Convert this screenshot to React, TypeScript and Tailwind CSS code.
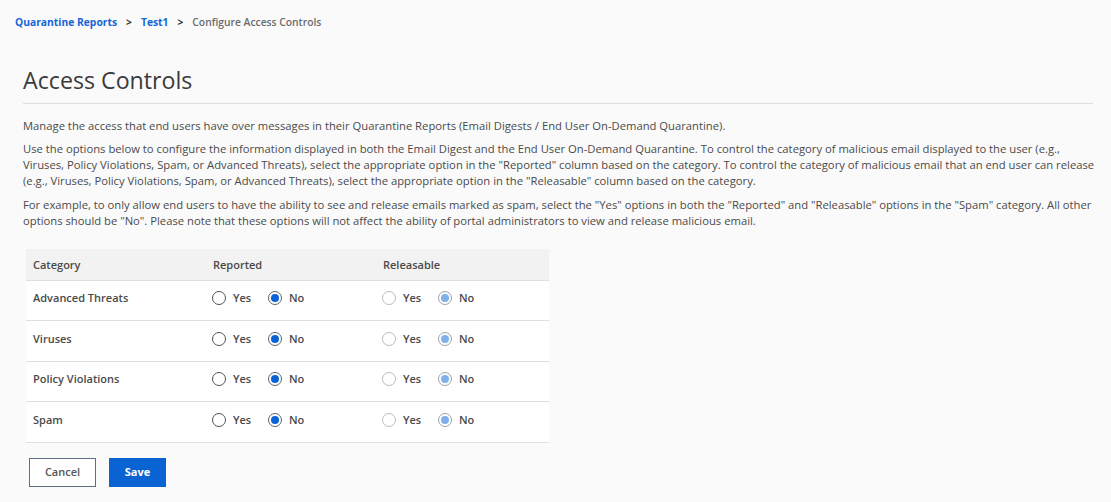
import { useState } from "react"

type Choice = "yes" | "no"

type Row = {
  name: string
  reported: Choice
  releasable: Choice
}

const INITIAL_ROWS: Row[] = [
  { name: "Advanced Threats", reported: "no", releasable: "no" },
  { name: "Viruses", reported: "no", releasable: "no" },
  { name: "Policy Violations", reported: "no", releasable: "no" },
  { name: "Spam", reported: "no", releasable: "no" },
]

function Radio({
  checked,
  disabled,
  label,
  onSelect,
}: {
  checked: boolean
  disabled?: boolean
  label: string
  onSelect: () => void
}) {
  const ring = disabled
    ? checked
      ? "border-[#9aa3ad]"
      : "border-[#b8bec5]"
    : checked
      ? "border-[#5b6470]"
      : "border-[#4a525c]"
  const dot = disabled ? "bg-[#7fb0ea]" : "bg-[#0a63d6]"

  return (
    <label
      className={`flex items-center gap-[7px] ${disabled ? "cursor-default" : "cursor-pointer"}`}
      onClick={() => !disabled && onSelect()}
    >
      <span
        className={`flex h-[14px] w-[14px] items-center justify-center rounded-full border bg-white ${ring}`}
      >
        {checked ? <span className={`h-[8px] w-[8px] rounded-full ${dot}`} /> : null}
      </span>
      <span className="text-[11px] font-semibold text-[#4a4a4a]">{label}</span>
    </label>
  )
}

function ChoiceGroup({
  value,
  disabled,
  onChange,
}: {
  value: Choice
  disabled?: boolean
  onChange: (value: Choice) => void
}) {
  return (
    <div className="flex items-center">
      <div className="w-[56px]">
        <Radio checked={value === "yes"} disabled={disabled} label="Yes" onSelect={() => onChange("yes")} />
      </div>
      <Radio checked={value === "no"} disabled={disabled} label="No" onSelect={() => onChange("no")} />
    </div>
  )
}

export default function App() {
  const [rows, setRows] = useState<Row[]>(INITIAL_ROWS)

  const update = (index: number, key: "reported" | "releasable", value: Choice) => {
    setRows((previous) =>
      previous.map((row, i) => (i === index ? { ...row, [key]: value } : row))
    )
  }

  return (
    <div
      className="min-h-[502px] bg-[#fafafa] text-[#444]"
      style={{ fontFamily: '"Open Sans", "Noto Sans", sans-serif' }}
    >
      <nav className="flex items-center px-[15px] pt-[15px] text-[10.3px] font-bold leading-[14px]">
        <a className="text-[#1565d8]" href="#">
          Quarantine Reports
        </a>
        <span className="mx-[9px] text-[#333]">&gt;</span>
        <a className="text-[#1565d8]" href="#">
          Test1
        </a>
        <span className="mx-[9px] text-[#333]">&gt;</span>
        <span className="font-semibold text-[#6b6b6b]">Configure Access Controls</span>
      </nav>

      <div className="px-[23px] pr-[15px]">
        <h1 className="mt-[35px] text-[23.2px] leading-[32px] text-[#3a3a3a]">Access Controls</h1>
        <div className="mr-[3px] mt-[7px] h-px bg-[#dedede]" />

        <div className="mt-[14px] text-[11.25px] leading-[16px] text-[#4a4a4a]">
          <p className="mb-[7px]">
            Manage the access that end users have over messages in their Quarantine Reports (Email Digests / End
            User On-Demand Quarantine).
          </p>
          <p className="mb-[8px]">
            Use the options below to configure the information displayed in both the Email Digest and the End User
            On-Demand Quarantine. To control the category of malicious email displayed to the user (e.g.,
            <br />
            Viruses, Policy Violations, Spam, or Advanced Threats), select the appropriate option in the "Reported"
            column based on the category. To control the category of malicious email that an end user can release
            <br />
            (e.g., Viruses, Policy Violations, Spam, or Advanced Threats), select the appropriate option in the
            "Releasable" column based on the category.
          </p>
          <p>
            For example, to only allow end users to have the ability to see and release emails marked as spam,
            select the "Yes" options in both the "Reported" and "Releasable" options in the "Spam" category. All
            other
            <br />
            options should be "No". Please note that these options will not affect the ability of portal
            administrators to view and release malicious email.
          </p>
        </div>

        <table className="ml-[3px] mt-[20px] w-[523px] border-collapse text-[11px] text-[#444]">
          <thead>
            <tr className="h-[31px] bg-[#f2f2f2] text-left">
              <th className="w-[180px] pl-[7px] pt-[2px] font-semibold text-[#4a4a4a]">Category</th>
              <th className="w-[170px] pl-[7px] pt-[2px] font-semibold text-[#4a4a4a]">Reported</th>
              <th className="pl-[7px] pt-[2px] font-semibold text-[#4a4a4a]">Releasable</th>
            </tr>
          </thead>
          <tbody>
            {rows.map((row, index) => (
              <tr key={row.name} className="h-[40.5px] border-t border-b border-[#e0e0e0] bg-white">
                <td className="pb-[4px] pl-[7px] font-semibold text-[#4a4a4a]">{row.name}</td>
                <td className="pb-[4px] pl-[6px]">
                  <ChoiceGroup value={row.reported} onChange={(value) => update(index, "reported", value)} />
                </td>
                <td className="pb-[4px] pl-[6px]">
                  <ChoiceGroup
                    value={row.releasable}
                    disabled
                    onChange={(value) => update(index, "releasable", value)}
                  />
                </td>
              </tr>
            ))}
          </tbody>
        </table>

        <div className="ml-[6px] mt-[15px] flex gap-[13px]">
          <button
            type="button"
            className="h-[29px] w-[67px] border border-[#5c6f86] bg-white text-[11px] font-semibold text-[#555]"
          >
            Cancel
          </button>
          <button
            type="button"
            className="h-[29px] w-[57px] bg-[#0a63d2] text-[11px] font-bold text-white"
          >
            Save
          </button>
        </div>
      </div>
    </div>
  )
}
